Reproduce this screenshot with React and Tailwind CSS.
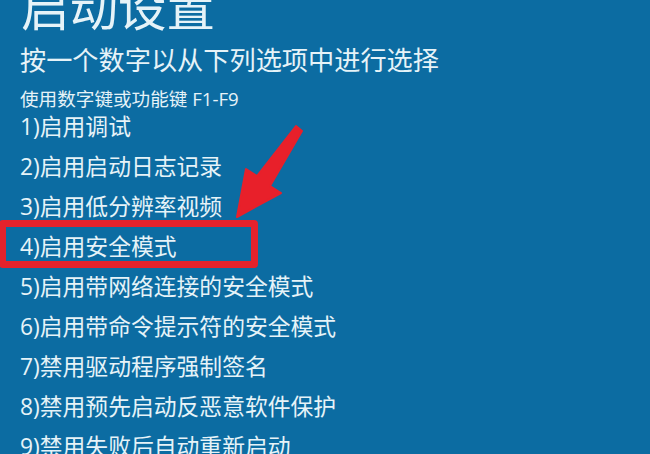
import React from "react"

const items = [
  "1)启用调试",
  "2)启用启动日志记录",
  "3)启用低分辨率视频",
  "4)启用安全模式",
  "5)启用带网络连接的安全模式",
  "6)启用带命令提示符的安全模式",
  "7)禁用驱动程序强制签名",
  "8)禁用预先启动反恶意软件保护",
  "9)禁用失败后自动重新启动",
]

const font = { fontFamily: '"Open Sans", "Noto Sans CJK SC", sans-serif' }

export default function App() {
  return (
    <div
      className="relative w-[650px] h-[454px] overflow-hidden bg-[#0c6ca2] text-[#e6f3f8] pl-[20px]"
      style={font}
    >
      <h1 className="mt-[-17px] text-[48.5px] leading-[48px] pl-[1px]">启动设置</h1>
      <p className="mt-[16px] text-[26.2px] leading-[26px]">按一个数字以从下列选项中进行选择</p>
      <p className="mt-[17px] text-[18.6px] leading-[17px]">使用数字键或功能键 F1-F9</p>
      <ul className="text-[22.8px] leading-[40px]">
        {items.map((t) => (
          <li key={t}>{t}</li>
        ))}
      </ul>

      {/* annotation: highlight box */}
      <div className="absolute left-[-1px] top-[220px] w-[259px] h-[48px] border-[7px] border-[#e5222c] rounded-[4px]" />

      {/* annotation: arrow */}
      <svg className="absolute left-0 top-0" width="650" height="454" viewBox="0 0 650 454">
        <polygon
          points="296,126 302,131 270,186 281,193 237,217 246,169 257,176"
          fill="#e8202a"
          strokeLinejoin="round"
          stroke="#e8202a"
          strokeWidth="2"
        />
      </svg>
    </div>
  )
}
